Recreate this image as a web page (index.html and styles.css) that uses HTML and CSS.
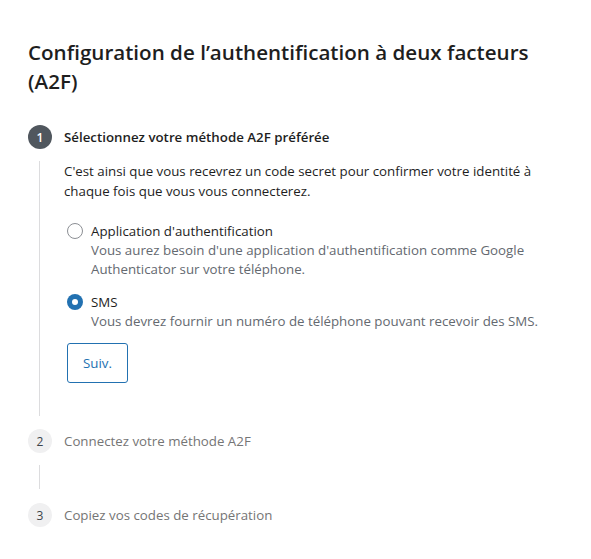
FILE: index.html
```html
<!DOCTYPE html>
<html lang="fr">
<head>
<meta charset="utf-8">
<link rel="stylesheet" href="styles.css">
</head>
<body>
<main class="page">
  <h1 class="title">Configuration de l’authentification à deux facteurs (A2F)</h1>
  <ol class="steps">
    <li class="step step-active">
      <div class="step-head">
        <span class="step-num">1</span>
        <span class="step-label">Sélectionnez votre méthode A2F préférée</span>
      </div>
      <div class="step-body">
        <p class="intro">C'est ainsi que vous recevrez un code secret pour confirmer votre identité à chaque fois que vous vous connecterez.</p>
        <div class="options">
          <label class="option">
            <span class="radio"></span>
            <span class="option-text">
              <span class="option-title">Application d'authentification</span>
              <span class="option-desc">Vous aurez besoin d'une application d'authentification comme Google Authenticator sur votre téléphone.</span>
            </span>
          </label>
          <label class="option">
            <span class="radio radio-checked"></span>
            <span class="option-text">
              <span class="option-title">SMS</span>
              <span class="option-desc">Vous devrez fournir un numéro de téléphone pouvant recevoir des SMS.</span>
            </span>
          </label>
        </div>
        <button class="btn">Suiv.</button>
      </div>
    </li>
    <li class="step">
      <div class="step-head">
        <span class="step-num">2</span>
        <span class="step-label">Connectez votre méthode A2F</span>
      </div>
      <div class="step-body step-body-empty"></div>
    </li>
    <li class="step">
      <div class="step-head">
        <span class="step-num">3</span>
        <span class="step-label">Copiez vos codes de récupération</span>
      </div>
    </li>
  </ol>
</main>
</body>
</html>
```

FILE: styles.css
```css
* { box-sizing: border-box; }
html, body { margin: 0; padding: 0; background: #fff; }
body {
  font-family: "Open Sans", "Noto Sans", sans-serif;
  color: #1e1e1e;
  font-size: 13.3px;
}
.page {
  padding: 38px 28px 20px 28px;
  width: 591px;
}
.title {
  margin: 0;
  font-size: 20.6px;
  line-height: 29px;
  font-weight: 600;
  color: #1e1e1e;
  width: 535px;
}
.steps {
  list-style: none;
  margin: 29px 0 0 0;
  padding: 0;
}
.step-head {
  display: flex;
  align-items: center;
  gap: 12px;
  height: 24px;
}
.step-num {
  width: 24px;
  height: 24px;
  border-radius: 50%;
  background: #f0f0f1;
  color: #3c434a;
  display: flex;
  align-items: center;
  justify-content: center;
  font-size: 12px;
  font-weight: 400;
}
.step-active .step-num {
  background: #50575e;
  color: #fff;
  font-weight: 600;
}
.step-label {
  font-size: 13.3px;
  color: #757575;
}
.step-active .step-label {
  font-weight: 600;
  color: #1e1e1e;
}
.step-body {
  margin: 12px 0 13px 11px;
  padding: 0 0 33px 24px;
  border-left: 1px solid #dcdcde;
}
.step-body-empty {
  height: 24px;
  padding: 0;
  margin-top: 12px;
  margin-bottom: 14px;
}
.intro {
  margin: 0;
  line-height: 20px;
  width: 480px;
}
.options {
  margin-top: 20px;
  display: flex;
  flex-direction: column;
  gap: 13px;
}
.option {
  display: flex;
  gap: 8px;
  align-items: flex-start;
}
.radio {
  width: 16px;
  height: 16px;
  border-radius: 50%;
  border: 1px solid #8c8f94;
  margin: 2px 0 0 3px;
  flex: none;
  display: flex;
  align-items: center;
  justify-content: center;
}
.radio-checked {
  border: none;
  background: #2271b1;
}
.radio-checked::after {
  content: "";
  width: 6px;
  height: 6px;
  border-radius: 50%;
  background: #fff;
}
.option-text {
  display: flex;
  flex-direction: column;
}
.option-title {
  line-height: 20px;
}
.option-desc {
  color: #646970;
  line-height: 19px;
}
.btn {
  margin: 12px 0 0 3px;
  height: 40px;
  padding: 0 15px;
  border: 1px solid #2271b1;
  border-radius: 3px;
  background: #fff;
  color: #2271b1;
  font-family: inherit;
  font-size: 13.3px;
}
```
